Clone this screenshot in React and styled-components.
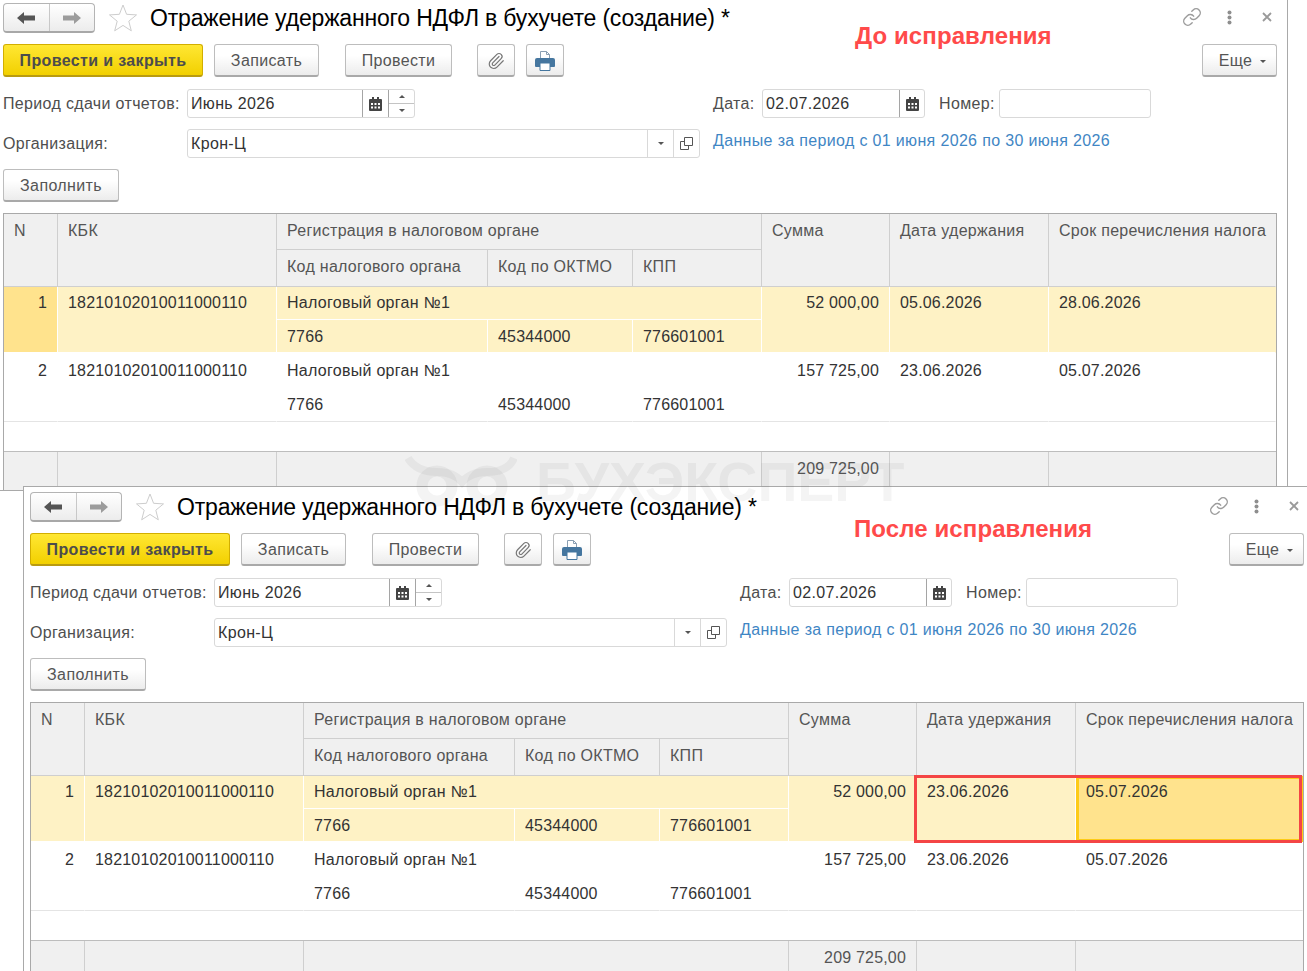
import styled, { createGlobalStyle } from 'styled-components';
import { Link as LinkIcon, Paperclip } from 'lucide-react';

const GlobalStyle = createGlobalStyle`
  html, body {
    margin: 0;
    padding: 0;
    background: #fff;
    overflow: hidden;
  }
  body {
    font-family: "Liberation Sans", Arial, sans-serif;
    font-size: 16px;
    letter-spacing: 0.34px;
    color: #4a4a4a;
  }
`;

const Desktop = styled.div`
  position: relative;
  width: 1307px;
  height: 971px;
  overflow: hidden;
`;

const TopWindow = styled.section`
  box-sizing: border-box;
  width: 1288px;
  height: 491px;
  padding: 3px 0 0 3px;
  border-right: 1px solid #a9a9a9;
  border-bottom: 1px solid #a9a9a9;
  overflow: hidden;
  background: #fff;
`;

const BottomWindow = styled.section`
  position: absolute;
  left: 23px;
  top: 486px;
  box-sizing: border-box;
  width: 1284px;
  height: 485px;
  padding: 5px 0 0 6px;
  border-top: 1px solid #a9a9a9;
  border-left: 1px solid #a9a9a9;
  overflow: hidden;
  background: #fff;
`;

const Form = styled.div`
  position: relative;
  width: 1274px;
`;

const TitleRow = styled.div`
  display: flex;
  align-items: center;
  height: 30px;
`;

const NavGroup = styled.div`
  display: flex;
  box-sizing: border-box;
  width: 92px;
  height: 30px;
  border: 1px solid #b4b4b4;
  border-bottom: 2px solid #a8a8a8;
  border-radius: 4px;
  background: linear-gradient(#fff, #ececec);
`;

const NavButton = styled.div`
  flex: 1;
  display: flex;
  align-items: center;
  justify-content: center;
  color: ${p => (p.$dim ? '#9c9c9c' : '#555')};
  & + & {
    border-left: 1px solid #c8c8c8;
  }
`;

const StarIcon = styled.svg`
  width: 30px;
  height: 30px;
  margin-left: 13px;
  flex: none;
`;

const Title = styled.h1`
  margin: 0 0 0 12px;
  font-size: 23px;
  font-weight: 400;
  letter-spacing: -0.18px;
  color: #000;
  line-height: 30px;
  white-space: nowrap;
`;

const WindowTools = styled.div`
  display: flex;
  align-items: center;
  margin-left: auto;
  margin-right: -9px;
  color: #9c9c9c;
`;

const ToolSlot = styled.div`
  display: flex;
  justify-content: center;
  align-items: center;
  width: ${p => p.$w}px;
  height: 30px;
  margin-top: -2px;
`;

const Toolbar = styled.div`
  display: flex;
  margin-top: 11px;
`;

const Button = styled.button`
  box-sizing: border-box;
  display: flex;
  align-items: center;
  justify-content: center;
  width: ${p => p.$w}px;
  height: 33px;
  margin-left: ${p => p.$ml || 0}px;
  padding: 2px 0 0;
  font: inherit;
  font-size: 16px;
  letter-spacing: 0.36px;
  color: #555;
  border: 1px solid #bdbdbd;
  border-bottom: 2px solid #a9a9a9;
  border-radius: 3px;
  background: linear-gradient(#fff 35%, #ececec);
`;

const PrimaryButton = styled(Button)`
  font-weight: 700;
  color: #4c4c4c;
  border: 1px solid #d2ae00;
  border-bottom: 2px solid #b99b10;
  background: linear-gradient(#ffe733, #f2d000);
`;

const MoreButton = styled(Button)`
  margin-left: auto;
  gap: 8px;
  padding-left: 6px;
`;

const FillButton = styled(Button)`
  margin-top: 11px;
`;

const Caret = styled.span`
  display: inline-block;
  width: 0;
  height: 0;
  border-left: 3px solid transparent;
  border-right: 3px solid transparent;
  border-top: ${p => (p.$up ? '0' : '3px solid #555')};
  border-bottom: ${p => (p.$up ? '3px solid #555' : '0')};
`;

const FieldRow = styled.div`
  display: flex;
  align-items: center;
  height: 29px;
  margin-top: ${p => p.$mt}px;
`;

const Label = styled.label`
  flex: none;
  width: ${p => p.$w}px;
  margin-left: ${p => p.$ml || 0}px;
  white-space: nowrap;
  color: #4e4e4e;
`;

const Field = styled.div`
  box-sizing: border-box;
  display: flex;
  flex: none;
  width: ${p => p.$w}px;
  height: 29px;
  border: 1px solid #d9d9d9;
  border-radius: 3px;
  background: #fff;
`;

const FieldValue = styled.div`
  flex: 1;
  padding-left: 3px;
  line-height: 27px;
  color: #333;
`;

const FieldAddon = styled.div`
  box-sizing: border-box;
  flex: none;
  display: flex;
  align-items: center;
  justify-content: center;
  width: ${p => p.$w}px;
  border-left: 1px solid ${p => (p.$light ? '#d9d9d9' : '#a5a5a5')};
  color: #444;
`;

const Spin = styled.div`
  box-sizing: border-box;
  flex: none;
  display: flex;
  flex-direction: column;
  width: 26px;
  border-left: 1px solid #a5a5a5;
`;

const SpinPart = styled.div`
  flex: 1;
  display: flex;
  align-items: center;
  justify-content: center;
  & + & {
    border-top: 1px solid #c4c4c4;
  }
`;

const PeriodLink = styled.a`
  margin-left: 13px;
  margin-top: -6px;
  color: #3f86c4;
  white-space: nowrap;
`;

const TableBox = styled.div`
  margin-top: 11px;
  border: 1px solid #a9a9a9;
  border-bottom: 0;
`;

const Table = styled.table`
  width: 1272px;
  table-layout: fixed;
  border-collapse: separate;
  border-spacing: 0;
  font-size: 16px;
  line-height: 18px;
  letter-spacing: 0.18px;
`;

const HeadCell = styled.th`
  box-sizing: border-box;
  height: ${p => p.$h || 36}px;
  padding: 8px 0 0 10px;
  vertical-align: top;
  text-align: left;
  font-weight: 400;
  letter-spacing: 0.28px;
  white-space: nowrap;
  color: #555;
  background: #f0f0f0;
  border-right: 1px solid ${p => (p.$last ? 'transparent' : '#cfcfcf')};
  border-bottom: 1px solid #cfcfcf;
  border-left: 0;
`;

const Cell = styled.td`
  box-sizing: border-box;
  height: ${p => p.$h}px;
  padding: ${p => p.$pt}px ${p => (p.$right ? '10px' : '0')} 0 ${p => (p.$right ? '0' : '10px')};
  vertical-align: top;
  text-align: ${p => (p.$right ? 'right' : 'left')};
  white-space: nowrap;
  color: #333;
  background: ${p => (p.$active ? '#ffe38d' : p.$selected ? '#fef2c5' : '#fff')};
  border-right: 1px solid ${p => (p.$selected && !p.$last ? '#fff' : 'transparent')};
  border-bottom: 1px solid ${p => (p.$selected ? '#fff' : p.$line ? '#e4e4e4' : 'transparent')};
`;

const AuthorityCell = styled(Cell)`
  letter-spacing: 0.28px;
`;

const FocusCell = styled(Cell)`
  outline: 3px solid #fdcb17;
  outline-offset: -3px;
`;

const BlankCell = styled.td`
  box-sizing: border-box;
  height: 30px;
  padding: 0;
  border-bottom: 1px solid #bdbdbd;
`;

const TotalCell = styled.td`
  box-sizing: border-box;
  height: 38px;
  padding: 8px 10px 0 0;
  vertical-align: top;
  text-align: right;
  color: #555;
  background: #f0f0f0;
  border-right: 1px solid ${p => (p.$last ? 'transparent' : '#cfcfcf')};
`;

const Note = styled.div`
  position: absolute;
  left: ${p => p.$x}px;
  top: ${p => p.$y}px;
  font-size: 24px;
  font-weight: 700;
  line-height: 28px;
  letter-spacing: 0.1px;
  color: #ff4a4a;
  white-space: nowrap;
`;

const RedFrame = styled.div`
  position: absolute;
  left: 884px;
  top: 283px;
  box-sizing: border-box;
  width: 388px;
  height: 68px;
  border: 3px solid #f44545;
  pointer-events: none;
`;

const Watermark = styled.div`
  position: absolute;
  left: 405px;
  top: 456px;
  display: flex;
  align-items: flex-start;
  gap: 19px;
  color: rgba(60, 60, 70, 0.06);
  pointer-events: none;
`;

const WatermarkText = styled.span`
  font-size: 55.5px;
  font-weight: 700;
  line-height: 52px;
  letter-spacing: 0;
  white-space: nowrap;
`;

const BackArrow = ({ flip }) => (
  <svg width="18" height="12" viewBox="0 0 18 12" style={flip ? { transform: 'scaleX(-1)' } : undefined}>
    <path d="M0 6 7 0v3.5h11v5H7V12z" fill="currentColor" />
  </svg>
);

const CalendarIcon = () => (
  <svg width="13" height="14" viewBox="0 0 13 14">
    <path d="M1 2h2V0h2v2h3V0h2v2h2a1 1 0 0 1 1 1v10a1 1 0 0 1-1 1H1a1 1 0 0 1-1-1V3a1 1 0 0 1 1-1z" fill="#444" />
    <path d="M2 6h2v2H2zM5.500 6h2v2h-2zM9 6h2v2H9zM2 9.500h2v2H2zM5.500 9.500h2v2h-2zM9 9.500h2v2H9z" fill="#fff" />
  </svg>
);

const OpenIcon = () => (
  <svg width="13" height="13" viewBox="0 0 13 13" fill="none" stroke="#555">
    <path d="M4.500.5h8v8h-8z" />
    <path d="M4.500 4.500h-4v8h8v-4" />
  </svg>
);

const PrinterIcon = () => (
  <svg width="20" height="20" viewBox="0 0 20 20">
    <path d="M5.500.5h6l3 3v5h-9z" fill="#fff" stroke="#8a9fb3" />
    <path d="M11.500.5v3h3" fill="none" stroke="#8a9fb3" />
    <path d="M2 7h16a2 2 0 0 1 2 2v6a1 1 0 0 1-1 1H1a1 1 0 0 1-1-1V9a2 2 0 0 1 2-2z" fill="#45769f" />
    <path d="M5 12h10v7.500H5z" fill="#fff" stroke="#45769f" />
  </svg>
);

const KebabIcon = () => (
  <svg width="5" height="15" viewBox="0 0 5 15" fill="#8e8e8e">
    <circle cx="2.500" cy="2.500" r="2" />
    <circle cx="2.500" cy="7.500" r="2" />
    <circle cx="2.500" cy="12.500" r="2" />
  </svg>
);

const CloseIcon = () => (
  <svg width="10" height="10" viewBox="0 0 10 10" stroke="#9a9a9a" strokeWidth="1.800">
    <path d="M1 1l8 8M9 1 1 9" />
  </svg>
);

const OwlLogo = () => (
  <svg width="112" height="52" viewBox="0 0 112 52" fill="none" stroke="currentColor">
    <circle cx="32" cy="30" r="15" strokeWidth="11" />
    <circle cx="82" cy="30" r="15" strokeWidth="11" />
    <path d="M3 2c6 10 16 14 29 14 13 0 20 4 25 10 5-6 12-10 25-10 13 0 23-4 27-14" strokeWidth="8" />
  </svg>
);

const colWidths = [54, 219, 211, 145, 129, 128, 159, 227];

const rowsBefore = [
  { n: 1, sum: '52 000,00', held: '05.06.2026', due: '28.06.2026', selected: true, active: 'n' },
  { n: 2, sum: '157 725,00', held: '23.06.2026', due: '05.07.2026' },
];

const rowsAfter = [
  { n: 1, sum: '52 000,00', held: '23.06.2026', due: '05.07.2026', selected: true, active: 'due' },
  { n: 2, sum: '157 725,00', held: '23.06.2026', due: '05.07.2026' },
];

function DataRow({ row }) {
  const sel = row.selected;
  const h1 = sel ? 33 : 34;
  const h2 = sel ? 33 : 35;
  const pt = sel ? 7 : 9;
  const pt2 = sel ? 8 : 9;
  const DueCell = row.active === 'due' ? FocusCell : Cell;
  return (
    <>
      <tr>
        <Cell rowSpan={2} $right $pt={pt} $h={h1} $selected={sel} $active={row.active === 'n'} $line>{row.n}</Cell>
        <Cell rowSpan={2} $pt={pt} $h={h1} $selected={sel} $line>18210102010011000110</Cell>
        <AuthorityCell colSpan={3} $pt={pt} $h={h1} $selected={sel}>Налоговый орган №1</AuthorityCell>
        <Cell rowSpan={2} $right $pt={pt} $selected={sel} $line>{row.sum}</Cell>
        <Cell rowSpan={2} $pt={pt} $selected={sel} $line>{row.held}</Cell>
        <DueCell rowSpan={2} $pt={pt} $selected={sel} $active={row.active === 'due'} $last $line>{row.due}</DueCell>
      </tr>
      <tr>
        <Cell $pt={pt2} $h={h2} $selected={sel} $line>7766</Cell>
        <Cell $pt={pt2} $h={h2} $selected={sel} $line>45344000</Cell>
        <Cell $pt={pt2} $h={h2} $selected={sel} $line>776601001</Cell>
      </tr>
    </>
  );
}

function DocForm({ rows, children }) {
  return (
    <Form>
      <TitleRow>
        <NavGroup>
          <NavButton><BackArrow /></NavButton>
          <NavButton $dim><BackArrow flip /></NavButton>
        </NavGroup>
        <StarIcon viewBox="0 0 30 30">
          <path d="M15 2l3.600 9.300 9.900.6-7.700 6.300 2.500 9.600L15 22.400l-8.300 5.400 2.500-9.600-7.700-6.300 9.900-.6z" fill="#fff" stroke="#cdcdcd" />
        </StarIcon>
        <Title>Отражение удержанного НДФЛ в бухучете (создание) *</Title>
        <WindowTools>
          <ToolSlot $w={36}><LinkIcon size={20} strokeWidth={1.7} /></ToolSlot>
          <ToolSlot $w={38}><KebabIcon /></ToolSlot>
          <ToolSlot $w={38}><CloseIcon /></ToolSlot>
        </WindowTools>
      </TitleRow>

      <Toolbar>
        <PrimaryButton $w={200}>Провести и закрыть</PrimaryButton>
        <Button $w={105} $ml={11}>Записать</Button>
        <Button $w={107} $ml={26}>Провести</Button>
        <Button $w={38} $ml={25}><Paperclip size={18} color="#777" strokeWidth={1.6} /></Button>
        <Button $w={38} $ml={11}><PrinterIcon /></Button>
        <MoreButton $w={75}>Еще <Caret /></MoreButton>
      </Toolbar>

      <FieldRow $mt={12}>
        <Label $w={184}>Период сдачи отчетов:</Label>
        <Field $w={228}>
          <FieldValue>Июнь 2026</FieldValue>
          <FieldAddon $w={26}><CalendarIcon /></FieldAddon>
          <Spin>
            <SpinPart><Caret $up /></SpinPart>
            <SpinPart><Caret /></SpinPart>
          </Spin>
        </Field>
        <Label $w={49} $ml={298}>Дата:</Label>
        <Field $w={163}>
          <FieldValue>02.07.2026</FieldValue>
          <FieldAddon $w={25}><CalendarIcon /></FieldAddon>
        </Field>
        <Label $w={60} $ml={14}>Номер:</Label>
        <Field $w={152} />
      </FieldRow>

      <FieldRow $mt={11}>
        <Label $w={184}>Организация:</Label>
        <Field $w={513}>
          <FieldValue>Крон-Ц</FieldValue>
          <FieldAddon $w={26} $light><Caret /></FieldAddon>
          <FieldAddon $w={26} $light><OpenIcon /></FieldAddon>
        </Field>
        <PeriodLink>Данные за период с 01 июня 2026 по 30 июня 2026</PeriodLink>
      </FieldRow>

      <FillButton $w={116}>Заполнить</FillButton>

      <TableBox>
        <Table>
          <colgroup>
            {colWidths.map((w, i) => <col key={i} width={w} />)}
          </colgroup>
          <thead>
            <tr>
              <HeadCell rowSpan={2}>N</HeadCell>
              <HeadCell rowSpan={2}>КБК</HeadCell>
              <HeadCell colSpan={3}>Регистрация в налоговом органе</HeadCell>
              <HeadCell rowSpan={2}>Сумма</HeadCell>
              <HeadCell rowSpan={2}>Дата удержания</HeadCell>
              <HeadCell rowSpan={2} $last>Срок перечисления налога</HeadCell>
            </tr>
            <tr>
              <HeadCell $h={37}>Код налогового органа</HeadCell>
              <HeadCell $h={37}>Код по ОКТМО</HeadCell>
              <HeadCell $h={37}>КПП</HeadCell>
            </tr>
          </thead>
          <tbody>
            {rows.map(row => <DataRow key={row.n} row={row} />)}
            <tr><BlankCell colSpan={8} /></tr>
            <tr>
              <TotalCell />
              <TotalCell />
              <TotalCell colSpan={3} />
              <TotalCell>209 725,00</TotalCell>
              <TotalCell />
              <TotalCell $last />
            </tr>
          </tbody>
        </Table>
      </TableBox>
      {children}
    </Form>
  );
}

export default function App() {
  return (
    <Desktop>
      <GlobalStyle />
      <TopWindow>
        <DocForm rows={rowsBefore} />
      </TopWindow>
      <BottomWindow>
        <DocForm rows={rowsAfter}>
          <RedFrame />
        </DocForm>
      </BottomWindow>
      <Note $x={855} $y={22}>До исправления</Note>
      <Note $x={854} $y={515}>После исправления</Note>
      <Watermark>
        <OwlLogo />
        <WatermarkText>БУХЭКСПЕРТ</WatermarkText>
      </Watermark>
    </Desktop>
  );
}
